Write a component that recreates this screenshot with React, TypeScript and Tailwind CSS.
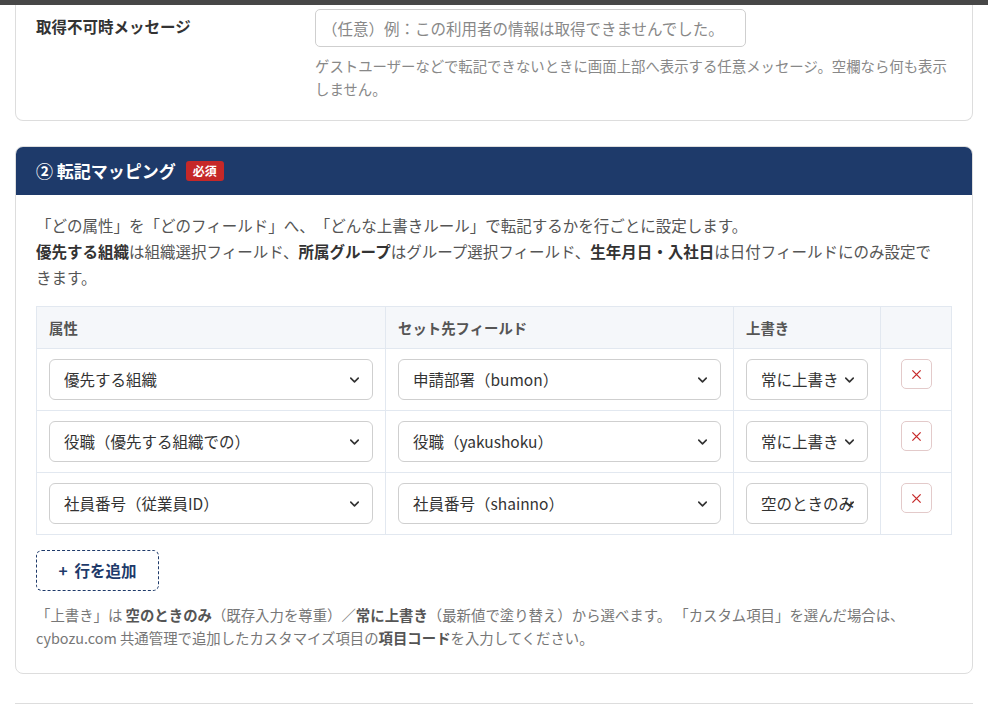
import { ChevronDown } from 'lucide-react';

const FONT = "font-['Noto_Sans_CJK_JP','Noto_Sans',sans-serif]";

interface Row {
  attr: string;
  field: string;
  mode: string;
}

const ROWS: Row[] = [
  { attr: '優先する組織', field: '申請部署（bumon）', mode: '常に上書き' },
  { attr: '役職（優先する組織での）', field: '役職（yakushoku）', mode: '常に上書き' },
  { attr: '社員番号（従業員ID）', field: '社員番号（shainno）', mode: '空のときのみ' },
];

function Select({ value, compact = false }: { value: string; compact?: boolean }) {
  return (
    <div className="relative">
      <select
        defaultValue={value}
        className={`w-full h-[41px] appearance-none rounded-md border border-[#cfcfcf] bg-white text-[15.5px] text-[#333] outline-none ${
          compact ? 'pl-[14px] pr-0 text-clip' : 'pl-[14px] pr-9'
        }`}
      >
        <option>{value}</option>
      </select>
      <ChevronDown
        className="pointer-events-none absolute right-[11px] top-1/2 -translate-y-1/2 w-[15px] h-[15px] text-[#333]"
        strokeWidth={2.6}
      />
    </div>
  );
}

export default function App() {
  return (
    <div className={`${FONT} [text-spacing-trim:space-all] min-h-[714px] bg-white text-[#333]`}>
      <div className="h-[5px] bg-[#474747]" />

      <div className="px-[15px]">
        {/* 取得不可時メッセージ */}
        <div className="border border-t-0 border-[#dddddd] rounded-b-lg px-5 pt-1 pb-[20px]">
          <div className="grid grid-cols-[279px_1fr]">
            <div className="pt-[6px] text-[15.5px] font-bold text-[#333]">取得不可時メッセージ</div>
            <div>
              <input
                placeholder="（任意）例：この利用者の情報は取得できませんでした。"
                className="w-[431px] h-[38px] rounded-[5px] border border-[#cfcfcf] px-[6px] text-[15.5px] placeholder:text-[#888] outline-none"
              />
              <p className="mt-[7px] text-[14.4px] leading-[23px] text-[#888]">
                ゲストユーザーなどで転記できないときに画面上部へ表示する任意メッセージ。空欄なら何も表示しません。
              </p>
            </div>
          </div>
        </div>

        {/* ② 転記マッピング */}
        <div className="mt-[25px] border border-[#dddddd] rounded-lg overflow-hidden">
          <div className="h-[48px] bg-[#1e3a6a] px-5 flex items-center gap-[10px]">
            <span className="text-[17px] font-bold text-white">② 転記マッピング</span>
            <span className="rounded-[3px] bg-[#c62828] px-[7px] text-[12px] font-bold text-white leading-[20px]">
              必須
            </span>
          </div>

          <div className="px-5 pt-[17px] pb-[24px]">
            <p className="pr-3 text-[15.5px] leading-[26px] text-[#555]">
              「どの属性」を「どのフィールド」へ、「どんな上書きルール」で転記するかを行ごとに設定します。
              <br />
              <b className="text-[#333]">優先する組織</b>は組織選択フィールド、<b className="text-[#333]">所属グループ</b>
              はグループ選択フィールド、<b className="text-[#333]">生年月日・入社日</b>は日付フィールドにのみ設定できます。
            </p>

            <table className="mt-[16px] w-full table-fixed border-collapse">
              <colgroup>
                <col className="w-[349px]" />
                <col className="w-[348px]" />
                <col className="w-[147px]" />
                <col />
              </colgroup>
              <thead>
                <tr className="bg-[#f5f7fa]">
                  {['属性', 'セット先フィールド', '上書き', ''].map((h, i) => (
                    <th
                      key={i}
                      className="h-[42px] border border-[#e2e8f0] px-3 text-left text-[14.4px] font-bold text-[#555]"
                    >
                      {h}
                    </th>
                  ))}
                </tr>
              </thead>
              <tbody>
                {ROWS.map((r) => (
                  <tr key={r.attr}>
                    <td className="border border-[#e2e8f0] px-3 py-[10px] align-top">
                      <Select value={r.attr} />
                    </td>
                    <td className="border border-[#e2e8f0] px-3 py-[10px] align-top">
                      <Select value={r.field} />
                    </td>
                    <td className="border border-[#e2e8f0] px-3 py-[10px] align-top">
                      <Select value={r.mode} compact />
                    </td>
                    <td className="border border-[#e2e8f0] py-[10px] align-top">
                      <div className="flex justify-center">
                        <button className="w-[31px] h-[30px] rounded-[5px] border border-[#e3caca] bg-white text-[#c62828] flex items-center justify-center">
                          <svg viewBox="0 0 12 12" className="w-[11px] h-[11px]" fill="none" stroke="currentColor" strokeWidth={1.4}>
                            <path d="M1.5 1.5l9 9M10.5 1.5l-9 9" />
                          </svg>
                        </button>
                      </div>
                    </td>
                  </tr>
                ))}
              </tbody>
            </table>

            <button className="mt-[15px] h-[41px] w-[123px] rounded-md border border-dashed border-[#1e3a6a] text-[15.5px] font-bold text-[#1e3a6a]">
              +&nbsp; 行を追加
            </button>

            <p className="mt-[12px] text-[14.4px] leading-[23px] text-[#777]">
              「上書き」は <b className="text-[#555]">空のときのみ</b>（既存入力を尊重）／<b className="text-[#555]">常に上書き</b>
              （最新値で塗り替え）から選べます。 「カスタム項目」を選んだ場合は、cybozu.com
              共通管理で追加したカスタマイズ項目の<b className="text-[#555]">項目コード</b>を入力してください。
            </p>
          </div>
        </div>

        <div className="mt-[29px] border-t border-[#dddddd] h-[10px]" />
      </div>
    </div>
  );
}
